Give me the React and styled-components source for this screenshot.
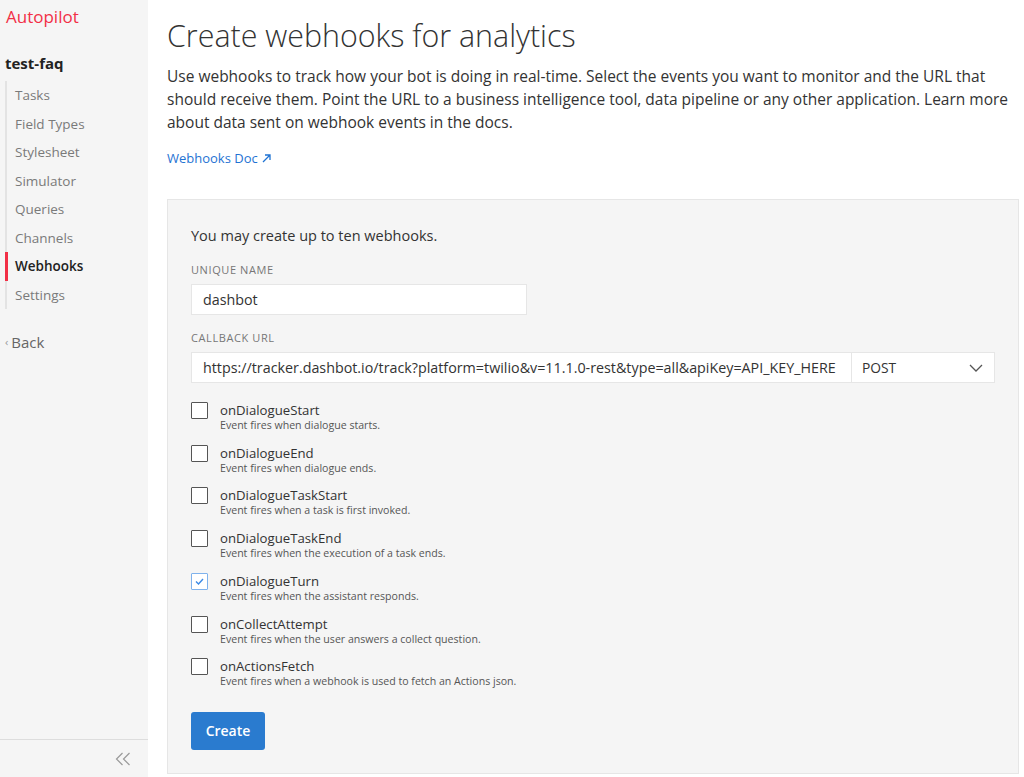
import React from "react";
import styled, { createGlobalStyle } from "styled-components";

const Global = createGlobalStyle`
  html, body { margin: 0; padding: 0; background: #fff; }
  body { font-family: "Open Sans", "Liberation Sans", sans-serif; color: #333; }
  * { box-sizing: border-box; }
`;

const Page = styled.div`
  display: flex;
  width: 1024px;
  height: 777px;
  overflow: hidden;
`;

const Sidebar = styled.aside`
  width: 148px;
  flex: none;
  background: #f5f5f5;
  display: flex;
  flex-direction: column;
`;

const SideTop = styled.div`
  flex: 1;
  padding: 5px 0 0 5px;
`;

const Brand = styled.div`
  font-size: 17px;
  line-height: 24px;
  color: #f22f46;
  padding-left: 1px;
`;

const Project = styled.div`
  margin-top: 24px;
  font-size: 15px;
  font-weight: 700;
  line-height: 20px;
  color: #222;
`;

const NavList = styled.ul`
  list-style: none;
  margin: 8px 0 0;
  padding: 0;
  border-left: 2px solid #e3e3e3;
  width: 140px;
`;

const NavItem = styled.li`
  font-size: 13.5px;
  line-height: 28.5px;
  padding-left: 7px;
  margin-left: -2px;
  border-left: 3px solid ${(p) => (p.$active ? "#f22f46" : "transparent")};
  color: ${(p) => (p.$active ? "#222" : "#7a7a7a")};
  font-weight: ${(p) => (p.$active ? 600 : 400)};
`;

const BackLink = styled.div`
  margin-top: 23px;
  display: flex;
  align-items: center;
  gap: 3px;
  font-size: 15px;
  line-height: 20px;
  color: #666;
`;

const BackArrow = styled.span`
  font-size: 11px;
  color: #999;
`;

const SideFooter = styled.div`
  height: 38px;
  border-top: 1px solid #ddd;
  display: flex;
  align-items: center;
  justify-content: flex-end;
  padding-right: 17px;
  color: #999;
`;

const Main = styled.main`
  flex: 1;
  padding: 18px 5px 0 19px;
  display: flex;
  flex-direction: column;
`;

const Title = styled.h1`
  margin: 0;
  font-size: 30.4px;
  line-height: 36px;
  font-weight: 300;
  color: #333;
`;

const Intro = styled.p`
  margin: 11px 0 0;
  font-size: 15.5px;
  line-height: 23px;
  color: #333;
`;

const DocLink = styled.a`
  margin-top: 15px;
  font-size: 13px;
  line-height: 18px;
  color: #1f73d3;
  text-decoration: none;
  display: inline-flex;
  align-items: center;
  gap: 4px;
  align-self: flex-start;
`;

const Panel = styled.section`
  margin-top: 32px;
  background: #f5f5f5;
  border: 1px solid #e6e6e6;
  padding: 25px 23px 23px;
  display: flex;
  flex-direction: column;
`;

const PanelLead = styled.div`
  font-size: 14.5px;
  line-height: 22px;
  font-weight: 500;
  color: #333;
`;

const FieldLabel = styled.div`
  margin-top: ${(p) => p.$mt || 15}px;
  font-size: 11px;
  line-height: 16px;
  letter-spacing: 0.6px;
  text-transform: uppercase;
  color: #777;
`;

const TextBox = styled.div`
  margin-top: 6px;
  height: 31px;
  width: ${(p) => p.$w || "auto"};
  background: #fff;
  border: 1px solid #e6e6e6;
  padding: 0 11px;
  display: flex;
  align-items: center;
  font-size: 14.3px;
  color: #333;
  white-space: nowrap;
  overflow: hidden;
`;

const UrlRow = styled.div`
  margin-top: 6px;
  display: flex;
  height: 31px;
  border: 1px solid #e6e6e6;
  background: #fff;
`;

const UrlText = styled.div`
  flex: 1;
  padding: 0 11px;
  display: flex;
  align-items: center;
  font-size: 14.3px;
  color: #333;
  white-space: nowrap;
  overflow: hidden;
  border-right: 1px solid #e6e6e6;
`;

const Select = styled.div`
  width: 142px;
  flex: none;
  display: flex;
  align-items: center;
  justify-content: space-between;
  padding: 0 11px 0 10px;
  font-size: 13.8px;
  color: #333;
`;

const Events = styled.div`
  margin-top: 19px;
  display: flex;
  flex-direction: column;
  gap: 12px;
`;

const EventRow = styled.label`
  display: flex;
  align-items: flex-start;
  gap: 12px;
`;

const Box = styled.span`
  flex: none;
  width: 17px;
  height: 17px;
  border: 1.5px solid ${(p) => (p.$checked ? "#7fb2ec" : "#555")};
  border-radius: 1px;
  background: #fff;
  display: flex;
  align-items: center;
  justify-content: center;
`;

const EventText = styled.div`
  display: flex;
  flex-direction: column;
`;

const EventName = styled.div`
  font-size: 13.2px;
  line-height: 17px;
  color: #333;
`;

const EventDesc = styled.div`
  font-size: 10.6px;
  line-height: 13.7px;
  color: #555;
`;

const CreateButton = styled.button`
  margin-top: 23px;
  align-self: flex-start;
  width: 74px;
  height: 38px;
  border: none;
  border-radius: 3px;
  background: #2a7bcf;
  color: #fff;
  font-family: inherit;
  font-size: 14px;
  font-weight: 600;
`;

const nav = ["Tasks", "Field Types", "Stylesheet", "Simulator", "Queries", "Channels", "Webhooks", "Settings"];

const events = [
  ["onDialogueStart", "Event fires when dialogue starts."],
  ["onDialogueEnd", "Event fires when dialogue ends."],
  ["onDialogueTaskStart", "Event fires when a task is first invoked."],
  ["onDialogueTaskEnd", "Event fires when the execution of a task ends."],
  ["onDialogueTurn", "Event fires when the assistant responds.", true],
  ["onCollectAttempt", "Event fires when the user answers a collect question."],
  ["onActionsFetch", "Event fires when a webhook is used to fetch an Actions json."],
];

export default function App() {
  return (
    <Page>
      <Global />
      <Sidebar>
        <SideTop>
          <Brand>Autopilot</Brand>
          <Project>test-faq</Project>
          <NavList>
            {nav.map((n) => (
              <NavItem key={n} $active={n === "Webhooks"}>{n}</NavItem>
            ))}
          </NavList>
          <BackLink><BackArrow>‹</BackArrow>Back</BackLink>
        </SideTop>
        <SideFooter>
          <svg width="16" height="14" viewBox="0 0 16 14" fill="none" stroke="#999" strokeWidth="1.2">
            <path d="M7.5 1 L1.5 7 L7.5 13" />
            <path d="M14.5 1 L8.5 7 L14.5 13" />
          </svg>
        </SideFooter>
      </Sidebar>
      <Main>
        <Title>Create webhooks for analytics</Title>
        <Intro>
          Use webhooks to track how your bot is doing in real-time. Select the events you want to monitor and the URL that
          <br />
          should receive them. Point the URL to a business intelligence tool, data pipeline or any other application. Learn more
          <br />
          about data sent on webhook events in the docs.
        </Intro>
        <DocLink href="#">
          Webhooks Doc
          <svg width="9" height="9" viewBox="0 0 9 9" fill="none" stroke="#1f73d3" strokeWidth="1.3">
            <path d="M1 8 L8 1 M3 1 H8 V6" />
          </svg>
        </DocLink>
        <Panel>
          <PanelLead>You may create up to ten webhooks.</PanelLead>
          <FieldLabel $mt={15}>Unique Name</FieldLabel>
          <TextBox $w="336px">dashbot</TextBox>
          <FieldLabel>Callback URL</FieldLabel>
          <UrlRow>
            <UrlText>https://tracker.dashbot.io/track?platform=twilio&amp;v=11.1.0-rest&amp;type=all&amp;apiKey=API_KEY_HERE</UrlText>
            <Select>
              POST
              <svg width="14" height="8" viewBox="0 0 14 8" fill="none" stroke="#555" strokeWidth="1.3">
                <path d="M1 1 L7 7 L13 1" />
              </svg>
            </Select>
          </UrlRow>
          <Events>
            {events.map(([name, desc, checked]) => (
              <EventRow key={name}>
                <Box $checked={checked}>
                  {checked && (
                    <svg width="9" height="7" viewBox="0 0 9 7" fill="none" stroke="#3b8ae6" strokeWidth="1.4">
                      <path d="M1 3.5 L3.5 6 L8 1" />
                    </svg>
                  )}
                </Box>
                <EventText>
                  <EventName>{name}</EventName>
                  <EventDesc>{desc}</EventDesc>
                </EventText>
              </EventRow>
            ))}
          </Events>
          <CreateButton>Create</CreateButton>
        </Panel>
      </Main>
    </Page>
  );
}
